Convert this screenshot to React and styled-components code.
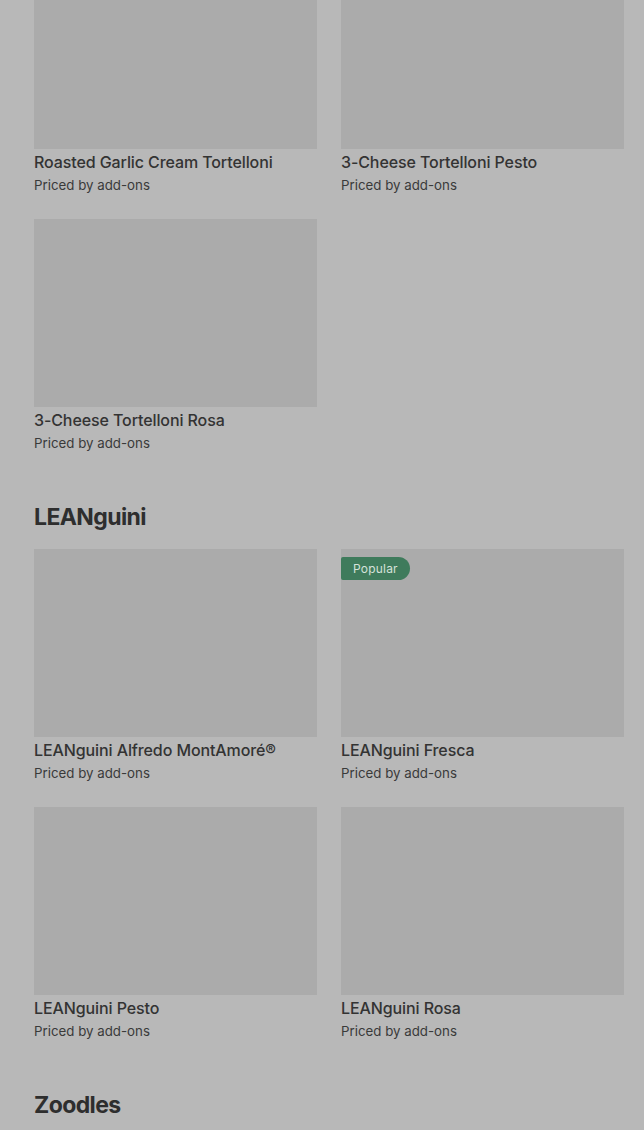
import React from "react";
import styled, { createGlobalStyle } from "styled-components";

const Global = createGlobalStyle`
  html, body { margin: 0; padding: 0; background: #b8b8b8; }
  body { font-family: Inter, "Noto Sans", sans-serif; color: #333; overflow: hidden; }
`;

const Page = styled.div`
  padding: 0 20px 0 34px;
  margin-top: -39px;
`;

const Section = styled.section`
  & + & { margin-top: 48px; }
`;

const Heading = styled.h2`
  margin: 0 0 16px;
  font-family: Inter, sans-serif;
  font-size: 23px;
  line-height: 32px;
  font-weight: 700;
  letter-spacing: -0.6px;
  color: #2e2e2e;
`;

const Grid = styled.div`
  display: grid;
  grid-template-columns: 283px 283px;
  column-gap: 24px;
  row-gap: 24px;
`;

const Card = styled.div`
  display: flex;
  flex-direction: column;
`;

const Thumb = styled.div`
  position: relative;
  height: 188px;
  background: #ababab;
`;

const Badge = styled.span`
  position: absolute;
  top: 8px;
  left: 0;
  height: 23px;
  padding: 0 12px;
  display: flex;
  align-items: center;
  background: #3f7b5c;
  color: #d5e2da;
  font-size: 12px;
  font-weight: 400;
  letter-spacing: 0.2px;
  border-radius: 2px 12px 12px 2px;
`;

const Title = styled.div`
  margin-top: 3px;
  font-size: 16px;
  line-height: 20px;
  font-weight: 500;
  letter-spacing: -0.1px;
  color: #333;
`;

const Price = styled.div`
  margin-top: 3px;
  font-size: 13.3px;
  line-height: 20px;
  color: #3a3a3a;
`;

const sections = [
  {
    items: [
      { name: "Roasted Garlic Cream Tortelloni" },
      { name: "3-Cheese Tortelloni Pesto" },
      { name: "3-Cheese Tortelloni Rosa" },
    ],
  },
  {
    title: "LEANguini",
    items: [
      { name: "LEANguini Alfredo MontAmoré®" },
      { name: "LEANguini Fresca", popular: true },
      { name: "LEANguini Pesto" },
      { name: "LEANguini Rosa" },
    ],
  },
  { title: "Zoodles", items: [] },
];

export default function App() {
  return (
    <>
      <Global />
      <Page>
        {sections.map((s, i) => (
          <Section key={i}>
            {s.title && <Heading>{s.title}</Heading>}
            {s.items.length > 0 && (
              <Grid>
                {s.items.map((it) => (
                  <Card key={it.name}>
                    <Thumb>{it.popular && <Badge>Popular</Badge>}</Thumb>
                    <Title>{it.name}</Title>
                    <Price>Priced by add-ons</Price>
                  </Card>
                ))}
              </Grid>
            )}
          </Section>
        ))}
      </Page>
    </>
  );
}
